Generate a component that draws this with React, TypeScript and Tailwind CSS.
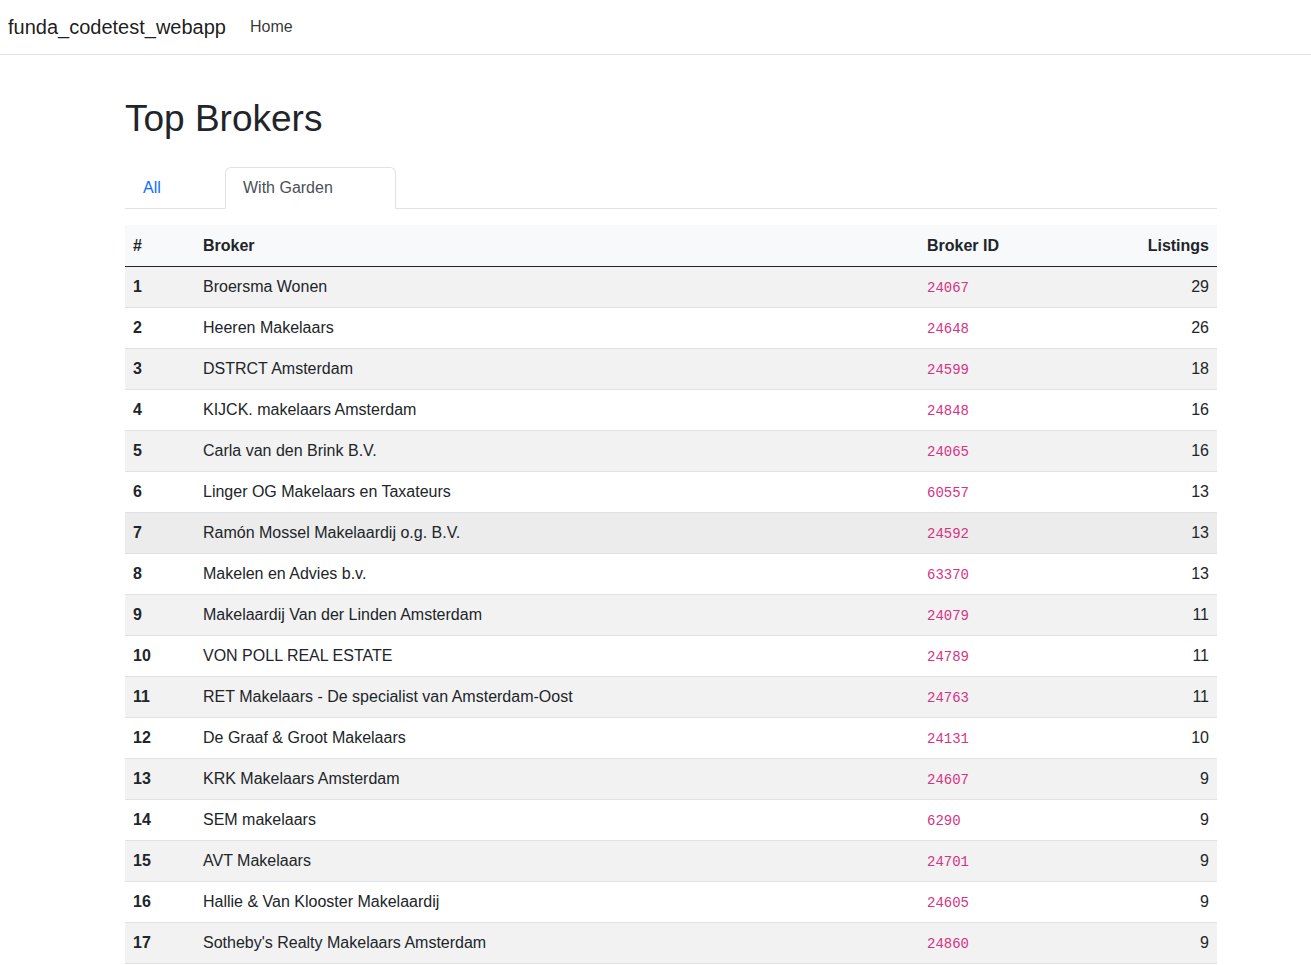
import React from "react";

const brokers: [number, string, string, number][] = [
  [1, "Broersma Wonen", "24067", 29],
  [2, "Heeren Makelaars", "24648", 26],
  [3, "DSTRCT Amsterdam", "24599", 18],
  [4, "KIJCK. makelaars Amsterdam", "24848", 16],
  [5, "Carla van den Brink B.V.", "24065", 16],
  [6, "Linger OG Makelaars en Taxateurs", "60557", 13],
  [7, "Ramón Mossel Makelaardij o.g. B.V.", "24592", 13],
  [8, "Makelen en Advies b.v.", "63370", 13],
  [9, "Makelaardij Van der Linden Amsterdam", "24079", 11],
  [10, "VON POLL REAL ESTATE", "24789", 11],
  [11, "RET Makelaars - De specialist van Amsterdam-Oost", "24763", 11],
  [12, "De Graaf & Groot Makelaars", "24131", 10],
  [13, "KRK Makelaars Amsterdam", "24607", 9],
  [14, "SEM makelaars", "6290", 9],
  [15, "AVT Makelaars", "24701", 9],
  [16, "Hallie & Van Klooster Makelaardij", "24605", 9],
  [17, "Sotheby's Realty Makelaars Amsterdam", "24860", 9],
];

export default function App() {
  return (
    <div className="min-h-screen bg-white text-[#212529] font-['Liberation_Sans',Arial,sans-serif] text-base">
      {/* navbar */}
      <nav className="h-[55px] border-b border-[#dee2e6] flex items-center px-2">
        <span className="text-[20px] text-black/90 mr-6">funda_codetest_webapp</span>
        <a className="text-base text-black/80">Home</a>
      </nav>

      <main className="ml-[125px] w-[1092px] pt-[42px]">
        <h1 className="text-[37px] leading-[1.2] font-normal">Top Brokers</h1>

        {/* tabs */}
        <div className="mt-[26px] flex border-b border-[#dee2e6]">
          <button className="w-[100px] h-[42px] pl-[17px] text-left text-[#0d6efd] border border-transparent -mb-px">
            All
          </button>
          <button className="w-[171px] h-[42px] pl-[17px] text-left text-[#495057] bg-white border border-[#dee2e6] border-b-white rounded-t-[6px] -mb-px">
            With Garden
          </button>
        </div>

        {/* table */}
        <table className="mt-4 w-full border-collapse">
          <thead>
            <tr className="bg-[#f8f9fa] border-b border-[#212529]">
              <th className="w-[70px] h-[41px] px-2 text-left font-bold">#</th>
              <th className="w-[724px] px-2 text-left font-bold">Broker</th>
              <th className="w-[180px] px-2 text-left font-bold">Broker ID</th>
              <th className="px-2 text-right font-bold">Listings</th>
            </tr>
          </thead>
          <tbody>
            {brokers.map(([n, name, id, count]) => (
              <tr
                key={n}
                className={
                  "border-b border-[#dee2e6] " +
                  (n === 7 ? "bg-[#ececec]" : n % 2 === 1 ? "bg-[#f2f2f2]" : "bg-white")
                }
              >
                <th className="h-[41px] px-2 text-left font-bold">{n}</th>
                <td className="px-2">{name}</td>
                <td className="px-2">
                  <code className="font-['Liberation_Mono',monospace] text-[14px] text-[#d63384]">{id}</code>
                </td>
                <td className="px-2 text-right">{count}</td>
              </tr>
            ))}
          </tbody>
        </table>
      </main>
    </div>
  );
}
